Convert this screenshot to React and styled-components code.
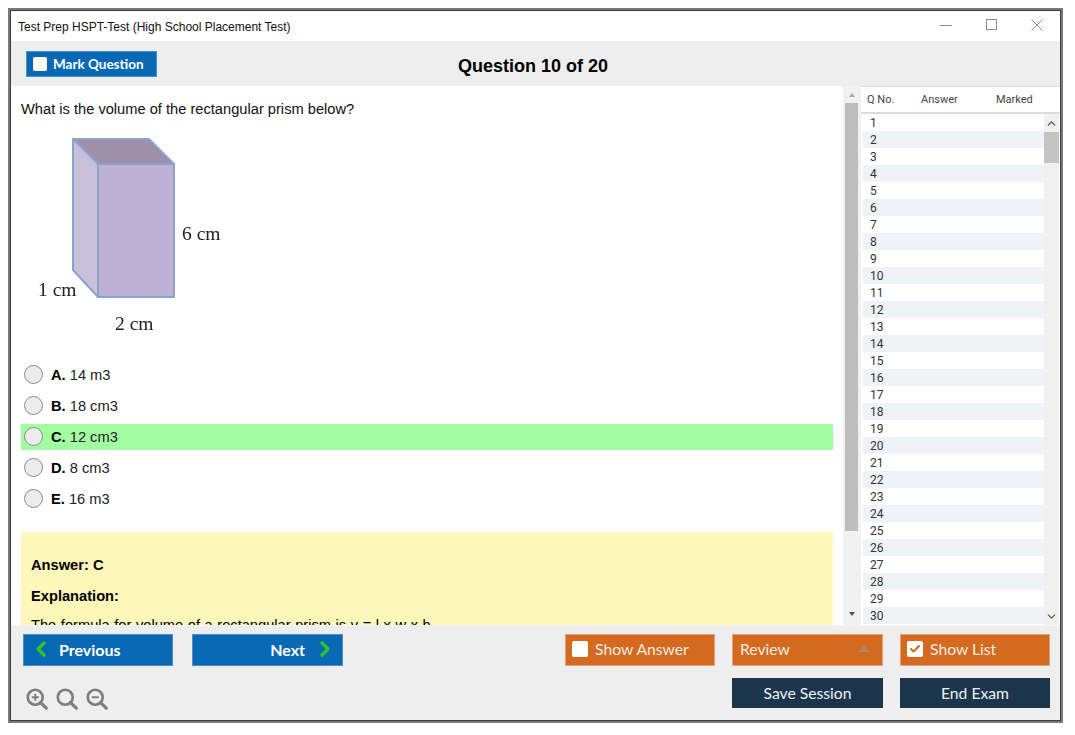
import React from "react";
import styled, { createGlobalStyle } from "styled-components";
import { Check, ChevronLeft, ChevronRight, ChevronUp, ChevronDown } from "lucide-react";

const Global = createGlobalStyle`
  html, body { margin: 0; padding: 0; background: #fff; }
  * { box-sizing: border-box; }
`;
const Page = styled.div`
  width: 1075px; height: 735px; padding: 8px 12px 12px 8px; background: #fff;
`;
const Win = styled.div`
  width: 1055px; height: 715px; background: #fff; border: 2px solid #7a7a7a;
  outline: 1px solid #3c3c3c; outline-offset: -3px; padding: 1px;
  display: flex; flex-direction: column; font-family: "Liberation Sans", Arial, sans-serif;
`;
const TitleBar = styled.div`
  height: 30px; flex: none; display: flex; align-items: center; justify-content: space-between;
  padding: 2px 0 0 7px; font-size: 12px; color: #111; background: #fff;
`;
const WinControls = styled.div`display: flex; align-items: center; gap: 34px; padding-right: 17px; margin-top: -5px;`;
const Header = styled.div`
  height: 45px; flex: none; background: #eee; position: relative; display: flex; align-items: center; padding-left: 15px;
`;
const HeaderTitle = styled.div`
  position: absolute; left: 0; width: 1044px; text-align: center; top: 15px; font-size: 18px; font-weight: bold; color: #000;
`;
const Btn = styled.div`
  display: flex; align-items: center; gap: ${p => p.$gap ?? 7}px; flex: none; width: ${p => p.$w || 150}px; height: ${p => p.$h || 32}px;
  padding: 0 ${p => p.$px ?? 6}px ${p => p.$pb ?? 2}px; justify-content: ${p => p.$justify || "flex-start"};
  background: ${p => p.$bg}; color: #fff; font-family: Lato, sans-serif; font-size: ${p => p.$size || 15.7}px;
  font-weight: ${p => p.$weight || 400}; border: 1px solid ${p => p.$edge || p.$bg};
`;
const Blue = styled(Btn).attrs({ $bg: "#0868b4", $edge: "#4a90cc", $weight: 700 })``;
const Orange = styled(Btn).attrs({ $bg: "#d46a1f", $edge: "#e6a272", $pb: 3 })`color: #f8ece2;`;
const Navy = styled(Btn).attrs({ $bg: "#1b364c", $h: 30, $justify: "center", $pb: 0 })`color: #eef2f5;`;
const Box = styled.span`
  width: ${p => p.$s || 16}px; height: ${p => p.$s || 16}px; flex: none; background: #fff; border-radius: 2px;
  display: flex; align-items: center; justify-content: center; color: #d46a1f;
`;
const ReviewLabel = styled.span`margin-left: 1px;`;
const Main = styled.div`height: 539px; flex: none; display: flex; background: #fff;`;
const Content = styled.div`
  width: 832px; flex: none; overflow: hidden; padding: 13px 0 0 10px; color: #111; height: 539px;
`;
const Question = styled.div`font-size: 14.67px; line-height: 20px; color: #111;`;
const Figure = styled.svg`display: block; width: 210px; height: 206px; margin: 17px 0 0 9px; overflow: visible;`;
const Options = styled.div`margin: 20px 0 0; width: 812px;`;
const Opt = styled.div`
  height: 26px; margin-bottom: 5px; display: flex; align-items: center; padding-left: 3px; gap: 8px;
  font-size: 14.67px; background: ${p => p.$hl ? "#a1ffa1" : "transparent"}; color: #222;
  b { color: #000; }
`;
const Radio = styled.span`
  width: 19px; height: 19px; border-radius: 50%; border: 1px solid #8b8b8b; background: #ececec; flex: none; margin-top: -1px;
`;
const Answer = styled.div`
  margin-top: 20px; width: 812px; height: 200px; background: #fdf7b9; padding: 25px 10px; font-size: 14.67px; color: #000;
  p { margin: 0 0 14px; line-height: 17px; font-weight: bold; }
  div { line-height: 17px; word-spacing: 0.5px; margin-top: -2px; }
`;
const VBar = styled.div`
  width: 18px; flex: none; background: #f1f1f1; display: flex; flex-direction: column; align-items: center;
`;
const Tri = styled.span`
  width: 0; height: 0; border-left: 3.5px solid transparent; border-right: 3.5px solid transparent;
  ${p => p.$down ? "border-top: 4px solid #505050; margin: 0 0 9px;" : "border-bottom: 4px solid #a8a8a8; margin: 7px 0 6px;"}
`;
const Thumb = styled.div`width: 13px; height: 428px; background: #bdbdbd; margin-right: 1px;`;
const Spacer = styled.div`flex: 1;`;
const List = styled.div`width: 199px; flex: none; display: flex; flex-direction: column; background: #fff; overflow: hidden;`;
const ListHead = styled.div`
  height: 28px; flex: none; border-top: 1px solid #dcdcdc; border-bottom: 2px solid #dcdcdc; background: #fff;
  display: grid; grid-template-columns: 54px 75px 66px; align-items: center; padding: 0 0 0 6px;
  font-family: Roboto, sans-serif; font-size: 11px; color: #444;
`;
const ListBody = styled.div`flex: 1; display: flex; min-height: 0; padding: 0 1px 0 2px;`;
const Rows = styled.div`flex: 1; overflow: hidden;`;
const Row = styled.div`
  height: 17.03px; line-height: 18px; padding-left: 7px; font-family: Roboto, sans-serif; font-size: 12px; color: #333;
  background: ${p => p.$alt ? "#eef3f8" : "#fff"};
`;
const ListScroll = styled.div`
  width: 15px; flex: none; background: #f0f0f0; display: flex; flex-direction: column; align-items: center; color: #555;
`;
const ListArrow = styled.div`height: 18px; flex: none; display: flex; align-items: center; justify-content: center;`;
const ListThumb = styled.div`width: 15px; height: 31px; background: #c4c4c4;`;
const Footer = styled.div`
  flex: 1; background: #eee; padding: 8px 10px 0 12px; display: flex; flex-direction: column; gap: 12px; border-top: 1px solid #f6f6f6;
`;
const FootRow = styled.div`display: flex; align-items: flex-start;`;
const Zooms = styled.div`display: flex; gap: 8px; padding: 10px 0 0 3px;`;
const Gap = styled.div`width: ${p => p.$w}px; flex: none;`;
const Green = styled.span`color: #2fc42f; display: flex;`;
const TriUp = styled.span`
  margin-left: auto; margin-right: 6px; width: 0; height: 0; border-left: 6px solid transparent; border-right: 6px solid transparent; border-bottom: 6px solid #a98a72;
`;

const ZoomIcon = ({ mode }) => (
  <svg width="22" height="22" viewBox="0 0 25 25" fill="none" stroke="#7d7d7d">
    <circle cx="10.5" cy="10.5" r="8.5" strokeWidth="3" />
    <path d="M16.5 16.5 L23 23" strokeWidth="3.6" strokeLinecap="round" />
    {mode !== "fit" && <path d="M6.5 10.5h8" strokeWidth="2.2" />}
    {mode === "in" && <path d="M10.5 6.5v8" strokeWidth="2.2" />}
  </svg>
);

const options = [["A.", "14 m3"], ["B.", "18 cm3"], ["C.", "12 cm3", true], ["D.", "8 cm3"], ["E.", "16 m3"]];

export default function App() {
  return (
    <Page>
      <Global />
      <Win>
        <TitleBar>
          Test Prep HSPT-Test (High School Placement Test)
          <WinControls>
            <svg width="12" height="12" viewBox="0 0 12 12"><path d="M0 6.5h12" stroke="#8a8a8a" /></svg>
            <svg width="11" height="11" viewBox="0 0 11 11"><rect x=".5" y=".5" width="10" height="10" fill="none" stroke="#8a8a8a" /></svg>
            <svg width="12" height="12" viewBox="0 0 12 12"><path d="M.5 .5l11 11M11.5 .5l-11 11" stroke="#8a8a8a" /></svg>
          </WinControls>
        </TitleBar>
        <Header>
          <Blue $w={131} $h={26} $size={13.5} $gap={6} $px={6} $pb={0}><Box $s={14} />Mark Question</Blue>
          <HeaderTitle>Question 10 of 20</HeaderTitle>
        </Header>
        <Main>
          <Content>
            <Question>What is the volume of the rectangular prism below?</Question>
            <Figure viewBox="0 0 210 206">
              <defs><filter id="soft"><feGaussianBlur stdDeviation="0.45" /></filter></defs>
              <g filter="url(#soft)" strokeWidth="2" stroke="#8aa3cf" strokeLinejoin="round">
                <polygon points="43,3 119,3 144,28 68,28" fill="#9e90a9" />
                <polygon points="43,3 68,28 68,161 43,134" fill="#c9c0da" />
                <rect x="68" y="28" width="76" height="133" fill="#bfb1d5" />
              </g>
              <g fontFamily="Liberation Serif, serif" fontSize="19.5" fill="#222" filter="url(#soft)">
                <text x="152" y="104">6 cm</text>
                <text x="8" y="160">1 cm</text>
                <text x="85" y="194">2 cm</text>
              </g>
            </Figure>
            <Options>
              {options.map(([k, v, hl]) => (
                <Opt key={k} $hl={hl}><Radio /><span><b>{k}</b> {v}</span></Opt>
              ))}
            </Options>
            <Answer>
              <p>Answer: C</p>
              <p>Explanation:</p>
              <div>The formula for volume of a rectangular prism is v = l x w x h</div>
            </Answer>
          </Content>
          <VBar>
            <Tri />
            <Thumb />
            <Spacer />
            <Tri $down />
          </VBar>
          <List>
            <ListHead><span>Q No.</span><span>Answer</span><span>Marked</span></ListHead>
            <ListBody>
              <Rows>
                {Array.from({ length: 30 }, (_, i) => <Row key={i} $alt={i % 2 === 1}>{i + 1}</Row>)}
              </Rows>
              <ListScroll>
                <ListArrow><ChevronUp size={13} strokeWidth={2.5} /></ListArrow>
                <ListThumb />
                <Spacer />
                <ListArrow><ChevronDown size={13} strokeWidth={2} /></ListArrow>
              </ListScroll>
            </ListBody>
          </List>
        </Main>
        <Footer>
          <FootRow>
            <Blue $px={5} $gap={6} $size={16}><Green><ChevronLeft size={24} strokeWidth={3.5} /></Green>Previous</Blue>
            <Gap $w={19} />
            <Blue $w={151} $px={5} $gap={8} $size={16} $justify="flex-end">Next<Green><ChevronRight size={24} strokeWidth={3.5} /></Green></Blue>
            <Gap $w={222} />
            <Orange><Box />Show Answer</Orange>
            <Gap $w={17} />
            <Orange $w={151}><ReviewLabel>Review</ReviewLabel><TriUp /></Orange>
            <Gap $w={17} />
            <Orange><Box><Check size={12} strokeWidth={4} /></Box>Show List</Orange>
          </FootRow>
          <FootRow>
            <Zooms><ZoomIcon mode="in" /><ZoomIcon mode="fit" /><ZoomIcon mode="out" /></Zooms>
            <Spacer />
            <Navy $w={151}>Save Session</Navy>
            <Gap $w={17} />
            <Navy>End Exam</Navy>
          </FootRow>
        </Footer>
      </Win>
    </Page>
  );
}
